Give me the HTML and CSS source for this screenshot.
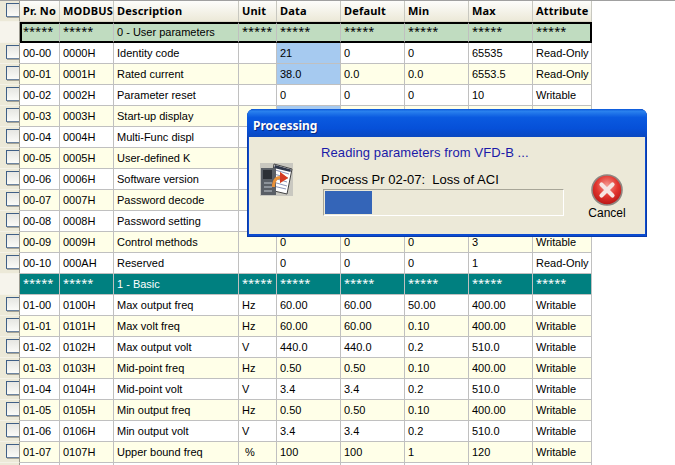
FILE: index.html
```html
<!DOCTYPE html>
<html>
<head>
<meta charset="utf-8">
<title>Processing</title>
<link rel="stylesheet" href="styles.css">
</head>
<body>
<div class="topline"></div>
<table class="grid">
<colgroup><col class="c0"><col class="c1"><col class="c2"><col class="c3"><col class="c4"><col class="c5"><col class="c6"><col class="c6"><col class="c6"><col class="c7"></colgroup>
<thead><tr><th class="sel"><span class="box"></span></th><th>Pr. No</th><th>MODBUS</th><th>Description</th><th>Unit</th><th>Data</th><th>Default</th><th>Min</th><th>Max</th><th>Attribute</th></tr></thead>
<tbody>
<tr class="sec cur"><td class="sel"></td><td>*****</td><td>*****</td><td class="name">0 - User parameters</td><td>*****</td><td>*****</td><td>*****</td><td>*****</td><td>*****</td><td>*****</td></tr>
<tr><td class="sel"><span class="box"></span></td><td>00-00</td><td>0000H</td><td>Identity code</td><td></td><td class="hl">21</td><td>0</td><td>0</td><td>65535</td><td>Read-Only</td></tr>
<tr class="alt"><td class="sel"><span class="box"></span></td><td>00-01</td><td>0001H</td><td>Rated current</td><td></td><td class="hl">38.0</td><td>0.0</td><td>0.0</td><td>6553.5</td><td>Read-Only</td></tr>
<tr><td class="sel"><span class="box"></span></td><td>00-02</td><td>0002H</td><td>Parameter reset</td><td></td><td>0</td><td>0</td><td>0</td><td>10</td><td>Writable</td></tr>
<tr class="alt"><td class="sel"><span class="box"></span></td><td>00-03</td><td>0003H</td><td>Start-up display</td><td></td><td class="hl"></td><td></td><td></td><td></td><td></td></tr>
<tr><td class="sel"><span class="box"></span></td><td>00-04</td><td>0004H</td><td>Multi-Func displ</td><td></td><td></td><td></td><td></td><td></td><td></td></tr>
<tr class="alt"><td class="sel"><span class="box"></span></td><td>00-05</td><td>0005H</td><td>User-defined K</td><td></td><td></td><td></td><td></td><td></td><td></td></tr>
<tr><td class="sel"><span class="box"></span></td><td>00-06</td><td>0006H</td><td>Software version</td><td></td><td></td><td></td><td></td><td></td><td></td></tr>
<tr class="alt"><td class="sel"><span class="box"></span></td><td>00-07</td><td>0007H</td><td>Password decode</td><td></td><td></td><td></td><td></td><td></td><td></td></tr>
<tr><td class="sel"><span class="box"></span></td><td>00-08</td><td>0008H</td><td>Password setting</td><td></td><td></td><td></td><td></td><td></td><td></td></tr>
<tr class="alt"><td class="sel"><span class="box"></span></td><td>00-09</td><td>0009H</td><td>Control methods</td><td></td><td>0</td><td>0</td><td>0</td><td>3</td><td>Writable</td></tr>
<tr><td class="sel"><span class="box"></span></td><td>00-10</td><td>000AH</td><td>Reserved</td><td></td><td>0</td><td>0</td><td>0</td><td>1</td><td>Read-Only</td></tr>
<tr class="sec teal"><td class="sel"></td><td>*****</td><td>*****</td><td class="name">1 - Basic</td><td>*****</td><td>*****</td><td>*****</td><td>*****</td><td>*****</td><td>*****</td></tr>
<tr><td class="sel"><span class="box"></span></td><td>01-00</td><td>0100H</td><td>Max output freq</td><td>Hz</td><td>60.00</td><td>60.00</td><td>50.00</td><td>400.00</td><td>Writable</td></tr>
<tr class="alt"><td class="sel"><span class="box"></span></td><td>01-01</td><td>0101H</td><td>Max volt freq</td><td>Hz</td><td>60.00</td><td>60.00</td><td>0.10</td><td>400.00</td><td>Writable</td></tr>
<tr><td class="sel"><span class="box"></span></td><td>01-02</td><td>0102H</td><td>Max output volt</td><td>V</td><td>440.0</td><td>440.0</td><td>0.2</td><td>510.0</td><td>Writable</td></tr>
<tr class="alt"><td class="sel"><span class="box"></span></td><td>01-03</td><td>0103H</td><td>Mid-point freq</td><td>Hz</td><td>0.50</td><td>0.50</td><td>0.10</td><td>400.00</td><td>Writable</td></tr>
<tr><td class="sel"><span class="box"></span></td><td>01-04</td><td>0104H</td><td>Mid-point volt</td><td>V</td><td>3.4</td><td>3.4</td><td>0.2</td><td>510.0</td><td>Writable</td></tr>
<tr class="alt"><td class="sel"><span class="box"></span></td><td>01-05</td><td>0105H</td><td>Min output freq</td><td>Hz</td><td>0.50</td><td>0.50</td><td>0.10</td><td>400.00</td><td>Writable</td></tr>
<tr><td class="sel"><span class="box"></span></td><td>01-06</td><td>0106H</td><td>Min output volt</td><td>V</td><td>3.4</td><td>3.4</td><td>0.2</td><td>510.0</td><td>Writable</td></tr>
<tr class="alt"><td class="sel"><span class="box"></span></td><td>01-07</td><td>0107H</td><td>Upper bound freq</td><td class="pct">%</td><td>100</td><td>100</td><td>1</td><td>120</td><td>Writable</td></tr>
<tr><td class="sel"><span class="box"></span></td><td></td><td></td><td></td><td></td><td></td><td></td><td></td><td></td><td></td></tr>
</tbody>
</table>
<div class="dialog">
  <div class="title">Processing</div>
  <div class="body">
    <svg class="doc" width="33" height="33" viewBox="0 0 33 33">
      <rect width="33" height="33" fill="#c9c8c0"/>
      <path d="M14 1 L32 6 L27 31 L10 27 Z" fill="#fff" stroke="#444"/>
      <path d="M15 7 L29 11 M14 11 L28 15 M14 15 L27 19 M13 19 L27 23 M13 23 L26 26" stroke="#8a94b8" stroke-width="1"/>
      <path d="M15 2 L31 6.500 L30.500 9 L14 5 Z" fill="#30384a"/>
      <rect x="1" y="5" width="15" height="27" fill="#5a5f66"/>
      <rect x="3" y="7" width="9" height="9" fill="#2c3036"/>
      <rect x="4" y="19" width="8" height="2" fill="#8d939a"/>
      <rect x="4" y="23" width="8" height="2" fill="#8d939a"/>
      <rect x="4" y="27" width="8" height="2" fill="#8d939a"/>
      <path d="M12 24 C12 16 16 13 20 13 L20 9 L28 15 L20 20 L20 16 C17 16 15 19 15 24 Z" fill="#e8913a"/>
      <path d="M20 9 L28 15 L20 20 Z" fill="#d43a24"/>
    </svg>
    <div class="main">
      <p class="reading">Reading parameters from VFD-B ...</p>
      <p class="process">Process Pr 02-07:&nbsp; Loss of ACI</p>
      <div class="track"><div class="fill"></div></div>
    </div>
    <div class="cancel">
      <svg width="32" height="32" viewBox="0 0 32 32">
        <defs><radialGradient id="red" cx="50%" cy="35%" r="65%"><stop offset="0" stop-color="#f59a90"/><stop offset=".55" stop-color="#e2362f"/><stop offset="1" stop-color="#b81414"/></radialGradient></defs>
        <circle cx="16" cy="16" r="15" fill="url(#red)" stroke="#8f8682" stroke-width="1.600"/>
        <path d="M10.500 10.500 L21.500 21.500 M21.500 10.500 L10.500 21.500" stroke="#f6e6e2" stroke-width="4.200" stroke-linecap="round"/>
      </svg>
      <span>Cancel</span>
    </div>
  </div>
</div>
</body>
</html>
```
FILE: styles.css
```css
html, body {
  margin: 0;
  height: 465px;
  overflow: hidden;
  background: #fff;
}
body {
  font-family: "Liberation Sans", "Noto Sans", sans-serif;
  font-size: 11px;
  color: #000;
}
.topline {
  height: 1px;
  background: #a0a0a0;
}
.grid {
  border-collapse: separate;
  border-spacing: 0;
  table-layout: fixed;
  width: 592px;
}
.c0 { width: 20px; }
.c1 { width: 40px; }
.c2 { width: 54px; }
.c3 { width: 125px; }
.c4 { width: 38px; }
.c5 { width: 64px; }
.c6 { width: 64px; }
.c7 { width: 59px; }
.grid th {
  height: 21px;
  padding: 0 0 2px 3px;
  box-sizing: border-box;
  text-align: left;
  font-family: "Noto Sans", sans-serif;
  font-size: 11px;
  letter-spacing: .2px;
  font-weight: 700;
  background: linear-gradient(#fdfdfb, #ece9d8);
  border-right: 1px solid #c8c8c0;
  border-bottom: 1px solid #d8d5c5;
  white-space: nowrap;
  overflow: hidden;
}
.grid td {
  height: 21px;
  padding: 0 0 0 3px;
  box-sizing: border-box;
  background: #fff;
  border-right: 1px solid #c0c0c0;
  border-bottom: 1px solid #c0c0c0;
  white-space: nowrap;
  overflow: hidden;
}
.grid tr.alt td { background: #ffffe8; }
.grid td.hl, .grid tr.alt td.hl { background: #a6caf0; }
.grid td.pct { padding-left: 6px; }
.grid th.sel, .grid td.sel, .grid tr.alt td.sel {
  padding: 0;
  vertical-align: top;
  background: #ece9d8;
  border-right: 1px solid #9c9a90;
  border-bottom: 1px solid #f4f2e8;
}
.box {
  display: block;
  width: 12px;
  height: 12px;
  margin: 2px 0 0 6px;
  border: 1px solid #3f5f86;
  border-right-color: #6d84a0;
  border-bottom-color: #6d84a0;
  background: linear-gradient(#e6e6e2, #fbfbf8);
  box-shadow: 1px 1px 0 #a6a498;
}
.grid tr.sec td {
  vertical-align: top;
  padding-top: 2px;
  line-height: 14px;
  font-family: "Noto Sans", sans-serif;
}
.grid tr.sec td.name {
  padding-top: 3px;
  font-family: "Liberation Sans", sans-serif;
}
.grid tr.sec td.sel { background: #f6f4ec; }
.grid tr.cur td:not(.sel) {
  background: #c0dcc0;
  border-top: 2px solid #000;
  border-bottom: 2px solid #000;
  padding-top: 0;
}
.grid tr.cur td.name { padding-top: 1px; }
.grid tr.cur td:nth-child(2) { border-left: 2px solid #000; padding-left: 1px; }
.grid tr.cur td:last-child { border-right: 2px solid #000; }
.grid tr.teal td:not(.sel) {
  background: #008080;
  color: #fff;
  border-color: #c0c0c0;
}
.dialog {
  position: absolute;
  left: 247px;
  top: 109px;
  width: 400px;
  height: 128px;
  box-sizing: border-box;
  display: flex;
  flex-direction: column;
  border-radius: 7px 7px 0 0;
  background: #0a4bd0;
  padding: 0 2px 3px 2px;
  box-shadow: 0 0 0 1px #0a3aa8 inset;
}
.title {
  height: 28px;
  margin: 0 -2px;
  padding: 7px 0 0 6px;
  box-sizing: border-box;
  border-radius: 7px 7px 0 0;
  background: linear-gradient(#0a55d8 0, #2a82ee 8%, #0a5ae0 30%, #0650d8 70%, #0a48c0 100%);
  color: #fff;
  font-family: "Noto Sans", sans-serif;
  font-weight: 700;
  font-size: 12px;
  line-height: 20px;
  text-shadow: 1px 1px 0 #0a2a80;
}
.body {
  flex: 1;
  display: flex;
  background: #ece9d8;
}
.doc {
  flex: none;
  margin: 26px 0 0 11px;
}
.main {
  width: 243px;
  margin-left: 28px;
  flex: none;
}
.reading {
  margin: 8px 0 0 0;
  color: #1a1aa8;
  font-size: 13px;
  letter-spacing: .1px;
  line-height: 16px;
}
.process {
  margin: 11px 0 0 0;
  font-size: 13px;
  line-height: 16px;
}
.track {
  margin: 1px 0 0 2px;
  width: 241px;
  height: 27px;
  box-sizing: border-box;
  border: 1px solid #a8a698;
  border-right-color: #fff;
  border-bottom-color: #fff;
  padding: 1px;
}
.fill {
  width: 47px;
  height: 23px;
  background: #3465b8;
}
.cancel {
  flex: none;
  width: 52px;
  margin: 37px 0 0 17px;
  display: flex;
  flex-direction: column;
  align-items: center;
  gap: 1px;
  font-size: 12px;
  line-height: 13px;
}
```
